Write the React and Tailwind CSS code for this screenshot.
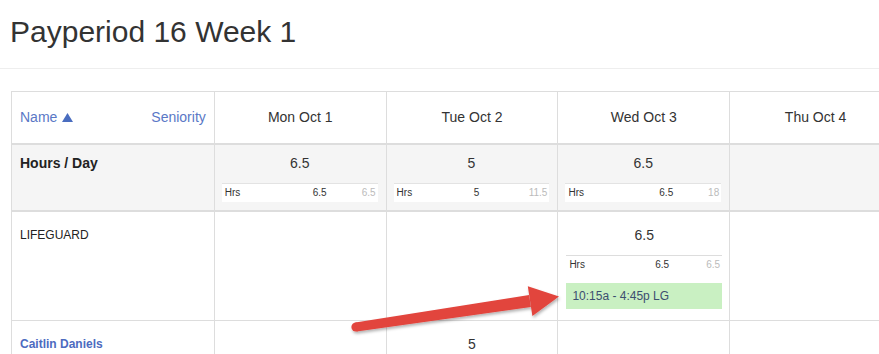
import React from "react";

function Mini({ hrs, max, third, bordered = true, bg = "bg-white" }) {
  return (
    <div
      className={`grid h-[19px] ${bg} ${bordered ? "border-t border-[#e3e3e3]" : "border-t border-[#dddddd]"} text-[10px] leading-[18px] text-[#333]`}
      style={{ gridTemplateColumns: `1fr auto ${third}px` }}
    >
      <span className="pl-[3px]">Hrs</span>
      <span>{hrs}</span>
      <span className="text-right pr-[2px] text-[#bbbbbb]">{max}</span>
    </div>
  );
}

export default function App() {
  const days = ["Mon Oct 1", "Tue Oct 2", "Wed Oct 3", "Thu Oct 4"];
  return (
    <div
      className="relative w-[879px] h-[354px] overflow-hidden bg-white text-[#333]"
      style={{ fontFamily: '"Liberation Sans", Arial, sans-serif' }}
    >
      <h2 className="pl-[10px] pt-[15px] text-[30px] leading-[33px] font-normal text-[#333]">
        Payperiod 16 Week 1
      </h2>
      <div className="mt-[20px] border-t border-[#eeeeee]" />
      <div className="ml-[11px] mt-[22px] w-[891px] border-l border-t border-[#dddddd]">
        {/* header row */}
        <div className="flex h-[53px]">
          <div className="flex w-[203px] items-center justify-between border-r border-b-2 border-[#dddddd] px-2 text-[14px] text-[#5a78c6]">
            <span className="flex items-center gap-[5px]">
              Name
              <svg width="11" height="9" viewBox="0 0 11 9" className="mt-[-1px]">
                <polygon points="5.5,0 11,9 0,9" fill="#4a6dbf" />
              </svg>
            </span>
            <span>Seniority</span>
          </div>
          {days.map((d) => (
            <div
              key={d}
              className="flex w-[172px] items-center justify-center border-r border-b-2 border-[#dddddd] text-[14px]"
            >
              {d}
            </div>
          ))}
        </div>
        {/* hours row */}
        <div className="flex h-[67px] bg-[#f5f5f5]">
          <div className="w-[203px] border-r border-b-2 border-[#dddddd] px-2 pt-2 text-[14px] font-bold leading-[20px] text-[#222]">
            Hours / Day
          </div>
          <div className="w-[172px] border-r border-b-2 border-[#dddddd] pl-[7px] pr-2 pt-2">
            <div className="text-center text-[14px] leading-[20px]">6.5</div>
            <div className="mt-[10px]">
              <Mini hrs="6.5" max="6.5" third={51} />
            </div>
          </div>
          <div className="w-[172px] border-r border-b-2 border-[#dddddd] pl-[7px] pr-2 pt-2">
            <div className="text-center text-[14px] leading-[20px]">5</div>
            <div className="mt-[10px]">
              <Mini hrs="5" max="11.5" third={70} />
            </div>
          </div>
          <div className="w-[172px] border-r border-b-2 border-[#dddddd] pl-[7px] pr-2 pt-2">
            <div className="text-center text-[14px] leading-[20px]">6.5</div>
            <div className="mt-[10px]">
              <Mini hrs="6.5" max="18" third={48} />
            </div>
          </div>
          <div className="w-[172px] border-r border-b-2 border-[#dddddd]" />
        </div>
        {/* lifeguard row */}
        <div className="flex h-[109px]">
          <div className="w-[203px] border-r border-b border-[#dddddd] px-2 pt-[13px] text-[12px] leading-[20px] text-[#222]">
            LIFEGUARD
          </div>
          <div className="w-[172px] border-r border-b border-[#dddddd]" />
          <div className="w-[172px] border-r border-b border-[#dddddd]" />
          <div className="w-[172px] border-r border-b border-[#dddddd] pl-2 pr-[7px] pt-[13px]">
            <div className="text-center text-[14px] leading-[20px]">6.5</div>
            <div className="mt-[10px]">
              <Mini hrs="6.5" max="6.5" third={53} bordered={false} />
            </div>
            <div className="mt-[9px] h-[26px] bg-[#c9f0c2] pl-[6px] text-[12px] leading-[26px] text-[#3c4e70]">
              10:15a - 4:45p LG
            </div>
          </div>
          <div className="w-[172px] border-r border-b border-[#dddddd]" />
        </div>
        {/* caitlin row */}
        <div className="flex h-[40px]">
          <div className="w-[203px] border-r border-[#dddddd] px-2 pt-[13px] text-[12px] font-bold leading-[20px] text-[#4d6bbf]">
            Caitlin Daniels
          </div>
          <div className="w-[172px] border-r border-[#dddddd]" />
          <div className="w-[172px] border-r border-[#dddddd] pt-[13px] text-center text-[14px] leading-[20px]">
            5
          </div>
          <div className="w-[172px] border-r border-[#dddddd]" />
          <div className="w-[172px] border-r border-[#dddddd]" />
        </div>
      </div>
      {/* annotation arrow */}
      <svg
        className="pointer-events-none absolute left-0 top-0"
        width="879"
        height="354"
        viewBox="0 0 879 354"
      >
        <defs>
          <filter id="sh" x="-10%" y="-50%" width="120%" height="200%">
            <feDropShadow dx="1" dy="2" stdDeviation="1.5" floodColor="#000" floodOpacity="0.3" />
          </filter>
        </defs>
        <g filter="url(#sh)" fill="#e2443d">
          <circle cx="356" cy="327" r="4.6" />
          <polygon points="355.3,322.4 529.1,295 530.9,306.9 356.7,331.6" />
          <polygon points="527.8,286.2 559,296.5 532.4,316" />
        </g>
      </svg>
    </div>
  );
}
